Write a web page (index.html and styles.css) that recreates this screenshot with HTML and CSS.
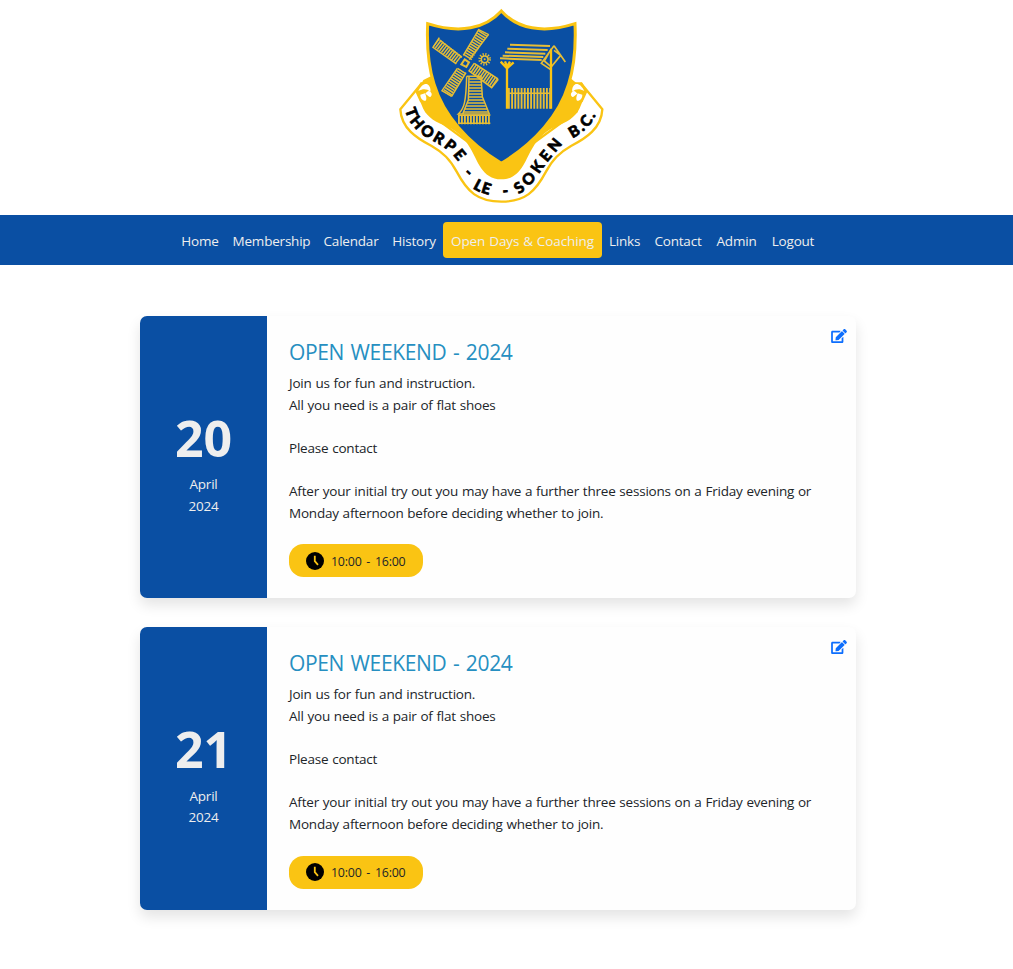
FILE: index.html
```html
<!DOCTYPE html>
<html lang="en">
<head>
<meta charset="utf-8">
<title>Thorpe-le-Soken B.C. - Open Days</title>
<link rel="stylesheet" href="styles.css">
</head>
<body>
<header class="banner">
<svg class="crest" viewBox="0 0 660 645" role="img" aria-label="Thorpe-le-Soken B.C. crest">
  <defs>
    <path id="w1" d="M45 330C54 362 69 384 104 408C138 429 176 443 206 487"/>
    <path id="w2" d="M220 522L238 539"/>
    <path id="w3" d="M248 564C265 575 283 582 308 587"/>
    <path id="w4" d="M339 589L360 587"/>
    <path id="w5" d="M387 583C422 560 438 534 458 506C476 480 498 457 522 427"/>
    <path id="w6" d="M547 415C580 399 606 375 621 337"/>
    <g id="fold">
      <path class="gold" d="M128 247H92L76 275L90 305L130 340L175 350Z"/>
      <path class="paper" d="M85 273C92 258 102 250 111 252C120 257 123 268 121 275C111 266 99 265 85 273Z"/>
      <path class="paper" d="M117 273C126 277 128 286 121 291C116 291 112 284 106 281C109 277 112 274 117 273Z"/>
      <path class="paper" d="M91 284L105 280C109 290 111 298 107 302C98 303 91 295 91 284Z"/>
    </g>
  </defs>
  <path class="ribbon" d="M94 251L31 328C34 385 80 415 125 438C160 458 180 478 200 515C232 575 262 605 334 605C406 605 436 575 468 515C488 478 508 458 543 438C588 415 634 385 637 328L574 251L560 335L334 500L110 335Z"/>
  <path class="gold" d="M100 240L80 278L95 315C105 345 128 362 160 375C200 390 222 413 240 443C262 478 275 538 334 538C393 538 406 478 428 443C446 413 468 390 508 375C540 362 563 345 573 315L588 278L560 250L500 200H180Z"/>
  <use href="#fold"/>
  <use href="#fold" transform="matrix(-1 0 0 1 668 0)"/>
  <path class="shield" d="M334 33C286 86 210 102 113 71C110 142 115 199 132 252C160 345 232 428 334 490C436 428 508 345 536 252C553 199 558 142 555 71C458 102 382 86 334 33Z"/>
  <g class="line">
    <g class="slats">
      <path d="M232 173L281 96"/><path d="M207 180L138 127"/><path d="M243 200L315 250"/><path d="M216 211L170 282"/>
    </g>
    <path d="M238 179L296 103M220 166L266 89L296 104M199 192L129 142L148 113M216 172L149 120M236 212L305 263L325 238M253 190L324 237M202 205L156 272L186 289M228 218L185 289"/>
    <path class="hub" d="M224 178L237 187L229 201L214 193Z"/>
    <circle class="rays" cx="284" cy="178" r="15"/><circle cx="284" cy="178" r="10"/><circle class="dot" cx="284" cy="178" r="3"/>
    <path d="M230 229H273L277 290L298 342H205C223 325 228 305 230 229M237 229L235 300L218 342"/>
    <path d="M238 237H272M238 246H273M237 255H274M237 264H274M236 273H275M236 282H276M235 291H278M234 300H281M232 309H284M229 318H287M225 327H292M220 336H296"/>
    <path class="slats base" d="M204 359H302"/><path d="M204 346H301M204 370H301"/>
    <path class="roof" d="M360 134L480 138M352 146L473 150M345 157L466 161M338 167L460 171M330 175L455 180"/>
    <path class="timber" d="M492 137L526 186M492 137L454 190L484 210M492 151L512 166L481 204M484 146L463 183L482 199"/>
    <path class="post" d="M351 326V192M483 326V150M332 185L351 205L371 187M345 184L351 200L360 185"/>
    <path class="slats fence" d="M354 295H482"/><path d="M351 280H483"/>
  </g>
  <g class="motto">
    <text><textPath href="#w1" textLength="228">THORPE</textPath></text>
    <text><textPath href="#w2">-</textPath></text>
    <text><textPath href="#w3" textLength="53">LE</textPath></text>
    <text><textPath href="#w4">-</textPath></text>
    <text><textPath href="#w5" textLength="201">SOKEN</textPath></text>
    <text><textPath href="#w6" textLength="102">B.C.</textPath></text>
  </g>
</svg>
</header>
<nav class="nav">
  <div class="menu">
    <a>Home</a><a>Membership</a><a>Calendar</a><a>History</a><a class="active">Open Days &amp; Coaching</a><a>Links</a><a>Contact</a><a>Admin</a><a>Logout</a>
  </div>
</nav>
<main class="events">
  <article class="card">
    <div class="date"><strong>20</strong><span>April</span><span>2024</span></div>
    <div class="info">
      <h2>OPEN WEEKEND - 2024</h2>
      <p>Join us for fun and instruction.<br>All you need is a pair of flat shoes<br><br>Please contact<br><br>After your initial try out you may have a further three sessions on a Friday evening or<br>Monday afternoon before deciding whether to join.</p>
      <div class="time"><svg viewBox="0 0 18 18"><circle cx="9" cy="9" r="9"/><path d="M8.8 3.8V9.2L12 12.8"/></svg><span>10:00 - 16:00</span></div>
    </div>
    <svg class="edit" viewBox="0 0 576 512"><path d="M402.6 83.2l90.2 90.2c3.8 3.8 3.8 10 0 13.8L274.4 405.6l-92.8 10.3c-12.4 1.4-22.9-9.1-21.5-21.5l10.3-92.8L388.8 83.2c3.8-3.8 10-3.8 13.8 0zm162-22.9l-48.8-48.8c-15.2-15.2-39.9-15.2-55.2 0l-35.4 35.4c-3.8 3.8-3.8 10 0 13.8l90.2 90.2c3.8 3.8 10 3.8 13.8 0l35.4-35.4c15.2-15.3 15.2-40 0-55.2zM384 346.2V448H64V128h229.8c3.2 0 6.2-1.3 8.5-3.5l40-40c7.6-7.6 2.2-20.5-8.5-20.5H48C21.5 64 0 85.5 0 112v352c0 26.5 21.5 48 48 48h352c26.5 0 48-21.5 48-48V306.2c0-10.7-12.9-16-20.5-8.5l-40 40c-2.2 2.3-3.5 5.3-3.5 8.5z"/></svg>
  </article>
  <article class="card">
    <div class="date"><strong>21</strong><span>April</span><span>2024</span></div>
    <div class="info">
      <h2>OPEN WEEKEND - 2024</h2>
      <p>Join us for fun and instruction.<br>All you need is a pair of flat shoes<br><br>Please contact<br><br>After your initial try out you may have a further three sessions on a Friday evening or<br>Monday afternoon before deciding whether to join.</p>
      <div class="time"><svg viewBox="0 0 18 18"><circle cx="9" cy="9" r="9"/><path d="M8.8 3.8V9.2L12 12.8"/></svg><span>10:00 - 16:00</span></div>
    </div>
    <svg class="edit" viewBox="0 0 576 512"><path d="M402.6 83.2l90.2 90.2c3.8 3.8 3.8 10 0 13.8L274.4 405.6l-92.8 10.3c-12.4 1.4-22.9-9.1-21.5-21.5l10.3-92.8L388.8 83.2c3.8-3.8 10-3.8 13.8 0zm162-22.9l-48.8-48.8c-15.2-15.2-39.9-15.2-55.2 0l-35.4 35.4c-3.8 3.8-3.8 10 0 13.8l90.2 90.2c3.8 3.8 10 3.8 13.8 0l35.4-35.4c15.2-15.3 15.2-40 0-55.2zM384 346.2V448H64V128h229.8c3.2 0 6.2-1.3 8.5-3.5l40-40c7.6-7.6 2.2-20.5-8.5-20.5H48C21.5 64 0 85.5 0 112v352c0 26.5 21.5 48 48 48h352c26.5 0 48-21.5 48-48V306.2c0-10.7-12.9-16-20.5-8.5l-40 40c-2.2 2.3-3.5 5.3-3.5 8.5z"/></svg>
  </article>
</main>
</body>
</html>
```
FILE: styles.css
```css
* { box-sizing: border-box; }
body { margin: 0; background: #fff; color: #212529; font: 13.5px/21.6px "Open Sans", "Noto Sans", sans-serif; letter-spacing: -.21px; word-spacing: .5px; }
.banner { height: 215px; display: flex; padding-left: 390px; }
.crest { width: 220px; height: 215px; }
.gold { fill: #fac413; }
.paper { fill: #fff; }
.ribbon { fill: #fff; stroke: #fac413; stroke-width: 7; stroke-linejoin: round; }
.shield { fill: #0a4fa3; stroke: #fac413; stroke-width: 9; stroke-linejoin: miter; }
.line { fill: none; stroke: #e6bd36; stroke-width: 4.5; }
.slats { stroke-width: 29; stroke-dasharray: 4.6 3; }
.base { stroke-width: 28; stroke-dasharray: 5.5 3.5; }
.fence { stroke-width: 62; stroke-dasharray: 5.5 4; }
.hub { fill: #0a4fa3; stroke-width: 6; }
.rays { stroke-width: 8; stroke-dasharray: 3.5 4.35; }
.dot { fill: #e6bd36; stroke: none; }
.roof { stroke-width: 6; }
.timber { stroke-width: 5; }
.post { stroke: #fac413; stroke-width: 7; }
.motto { font: 900 46px/1 Lato, sans-serif; fill: #000; stroke: #000; stroke-width: 2; letter-spacing: 0; }
.nav { height: 50px; background: #0a4fa3; padding: 7px 0 0 174px; }
.menu { display: grid; grid-template-columns: 52px 91px 68px 58px 159px 45px 62px 55px 58px; height: 36px; }
.menu a { display: flex; align-items: center; justify-content: center; padding-top: 3px; color: #eee; border-radius: 4px; white-space: nowrap; }
.menu .active { background: #fac413; letter-spacing: -.1px; }
.events { display: grid; gap: 29px; width: 716px; margin: 51px 0 0 140px; padding-bottom: 58px; }
.card { position: relative; display: flex; height: 282.4px; background: #fefefe; border-radius: 7px; box-shadow: 0 7px 14px rgba(0, 0, 0, .11); }
.date { width: 127px; display: flex; flex-direction: column; align-items: center; justify-content: center; padding-top: 2px; background: #0a4fa3; color: #eee; border-radius: 7px 0 0 7px; }
.date strong { padding-top: 4px; font-size: 50px; line-height: 71.6px; letter-spacing: 0; }
.info { padding: 23px 22px 22px; white-space: nowrap; }
h2 { margin: 0 0 7px; font-size: 21px; font-weight: 400; line-height: 27px; letter-spacing: -.35px; word-spacing: 1.4px; color: #268fc1; }
p { margin: 0 0 20px; }
.time { display: flex; align-items: center; gap: 7px; width: 134px; height: 33px; padding-left: 17px; border-radius: 14.5px; background: #fac413; font-size: 12.4px; word-spacing: 1.8px; }
.time svg { width: 18px; height: 18px; fill: #000; }
.time span { padding-top: 2px; }
.time path { fill: none; stroke: #fac413; stroke-width: 1.8; }
.edit { position: absolute; top: 13px; right: 9px; width: 16px; height: 14px; fill: #0d6efd; }
```
